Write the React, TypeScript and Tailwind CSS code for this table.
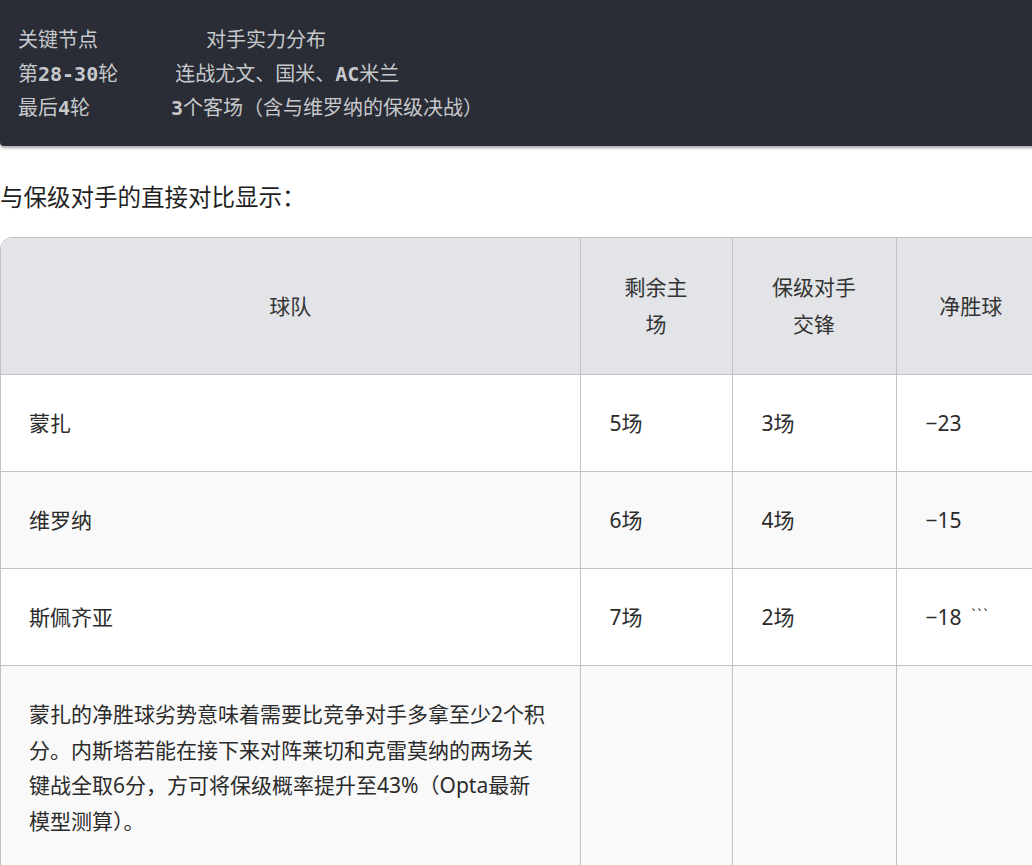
import React from "react";

const cjk = { fontFamily: '"Noto Sans", "Noto Sans CJK SC", sans-serif' };
const mono = { fontFamily: '"DejaVu Sans Mono", "Noto Sans CJK SC", monospace' };

function L({ children }: { children: React.ReactNode }) {
  return <span className="font-bold">{children}</span>;
}

export default function App() {
  const rows = [
    { team: "蒙扎", home: "5场", vs: "3场", gd: "−23", extra: "" },
    { team: "维罗纳", home: "6场", vs: "4场", gd: "−15", extra: "" },
    { team: "斯佩齐亚", home: "7场", vs: "2场", gd: "−18", extra: "```" },
  ];
  return (
    <div className="w-[1032px] h-[865px] overflow-hidden bg-white">
      <div
        className="w-[1040px] h-[146px] bg-[#2a2d35] rounded-bl-[4px] shadow-[0_2px_3px_rgba(0,0,0,0.35)] pt-[23px] pl-[18px] text-[20px] leading-[34px] text-[#c6c8cc]"
        style={mono}
      >
        <div className="flex whitespace-pre">
          <span>关键节点</span>
          <span className="ml-[108px]">对手实力分布</span>
        </div>
        <div className="flex whitespace-pre">
          <span>
            第<L>28-30</L>轮
          </span>
          <span className="ml-[57px]">
            连战尤文、国米、<L>AC</L>米兰
          </span>
        </div>
        <div className="flex whitespace-pre">
          <span>
            最后<L>4</L>轮
          </span>
          <span className="ml-[81px]">
            <L>3</L>个客场（含与维罗纳的保级决战）
          </span>
        </div>
      </div>

      <p className="mt-[34px] text-[23.5px] leading-[34px] text-[#1f1f1f]" style={cjk}>
        与保级对手的直接对比显示：
      </p>

      <div className="mt-[23px] w-[1046px] border border-[#c2c2c2] rounded-tl-[12px] overflow-hidden" style={cjk}>
        <table className="w-full table-fixed border-collapse text-[21px] text-[#2b2b2b]">
          <colgroup>
            <col className="w-[579px]" />
            <col className="w-[152px]" />
            <col className="w-[164px]" />
            <col />
          </colgroup>
          <thead>
            <tr className="bg-[#e2e4e7] text-[#333]">
              <th className="font-normal leading-[37px] py-[31px] px-[29px] text-center align-middle">球队</th>
              <th className="font-normal leading-[37px] py-[31px] px-[20px] text-center align-middle border-l border-[#c2c2c2]">
                剩余主
                <br />
                场
              </th>
              <th className="font-normal leading-[37px] py-[31px] px-[20px] text-center align-middle border-l border-[#c2c2c2]">
                保级对手
                <br />
                交锋
              </th>
              <th className="font-normal leading-[37px] py-[31px] px-[20px] text-center align-middle border-l border-[#c2c2c2]">
                净胜球
              </th>
            </tr>
          </thead>
          <tbody>
            {rows.map((r, i) => (
              <tr key={r.team} className={i % 2 === 1 ? "bg-[#f9f9f9]" : "bg-white"}>
                <td className="border-t border-[#c2c2c2] py-[30px] px-[28px] leading-[36px]">{r.team}</td>
                <td className="border-t border-l border-[#c2c2c2] py-[30px] px-[29px] leading-[36px]">{r.home}</td>
                <td className="border-t border-l border-[#c2c2c2] py-[30px] px-[29px] leading-[36px]">{r.vs}</td>
                <td className="border-t border-l border-[#c2c2c2] py-[30px] px-[29px] leading-[36px] whitespace-nowrap">
                  {r.gd}
                  {r.extra && (
                    <span className="ml-[10px] text-[14px] tracking-[2px] align-top relative top-[-2px]">{r.extra}</span>
                  )}
                </td>
              </tr>
            ))}
            <tr className="bg-[#f9f9f9]">
              <td className="border-t border-[#c2c2c2] pt-[31px] pb-[40px] pl-[28px] pr-[33px] leading-[35.7px] align-top">
                蒙扎的净胜球劣势意味着需要比竞争对手多拿至少2个积分。内斯塔若能在接下来对阵莱切和克雷莫纳的两场关键战全取6分，方可将保级概率提升至43%（Opta最新模型测算）。
              </td>
              <td className="border-t border-l border-[#c2c2c2]"></td>
              <td className="border-t border-l border-[#c2c2c2]"></td>
              <td className="border-t border-l border-[#c2c2c2]"></td>
            </tr>
          </tbody>
        </table>
      </div>
    </div>
  );
}
